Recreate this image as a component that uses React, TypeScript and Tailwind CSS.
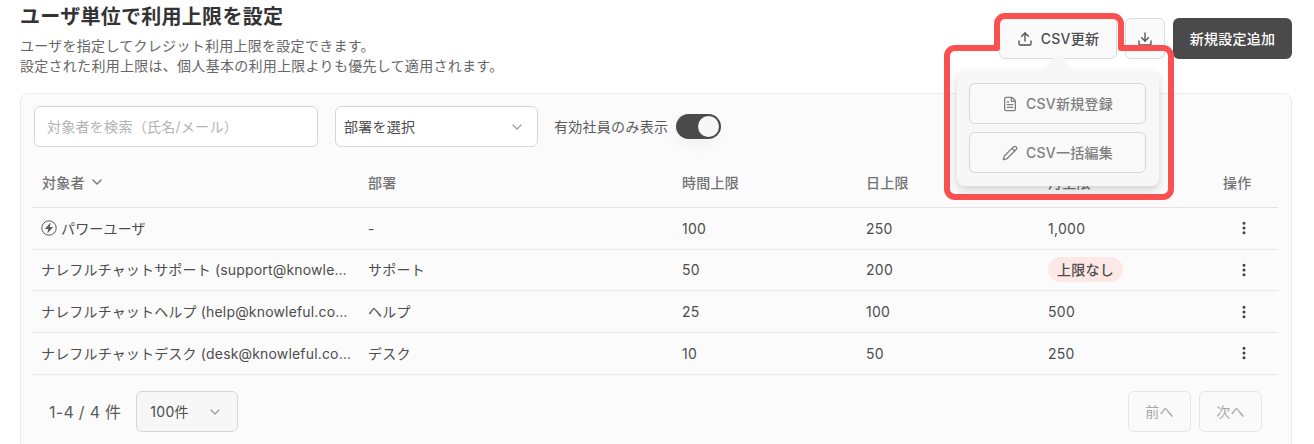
import { ChevronDown, Download, EllipsisVertical, FileText, Pencil, Upload } from 'lucide-react';

const rows = [
  { name: 'パワーユーザ', power: true, dept: '-', hour: '100', day: '250', month: '1,000' },
  { name: 'ナレフルチャットサポート (support@knowleful.co.jp)', dept: 'サポート', hour: '50', day: '200', month: null },
  { name: 'ナレフルチャットヘルプ (help@knowleful.co.jp)', dept: 'ヘルプ', hour: '25', day: '100', month: '500' },
  { name: 'ナレフルチャットデスク (desk@knowleful.co.jp)', dept: 'デスク', hour: '10', day: '50', month: '250' },
];

function PowerIcon() {
  return (
    <svg viewBox="0 0 16 16" className="w-4 h-4 shrink-0 text-[#5c5c5c]" fill="none">
      <circle cx="8" cy="8" r="7.2" stroke="currentColor" strokeWidth="1" />
      <path d="M9.6 2.4 3.8 9h3.3l-.8 4.6L12.2 7H8.8z" fill="currentColor" />
    </svg>
  );
}

export default function App() {
  return (
    <div className="relative h-[444px] w-[1314px] overflow-hidden bg-white font-['Inter','Noto_Sans_CJK_JP',sans-serif] text-[14px] tracking-[0.02em] text-[#4d4d4d]">
      <div className="flex items-start justify-between pl-5 pr-[22px]">
        <div className="pt-[3px]">
          <h1 className="text-[20px] leading-[28px] font-semibold text-[#333333]">ユーザ単位で利用上限を設定</h1>
          <p className="mt-[5px] text-[14px] leading-[20px] text-[#666666]">
            ユーザを指定してクレジット利用上限を設定できます。
            <br />
            設定された利用上限は、個人基本の利用上限よりも優先して適用されます。
          </p>
        </div>
        <div className="flex items-center gap-2 pt-[18px]">
          <button className="flex h-[41px] w-[118px] items-center justify-center gap-2 rounded-md border border-[#dcdcdc] bg-[#fafafa] font-medium text-[#4d4d4d]">
            <Upload className="h-4 w-4" />
            CSV更新
          </button>
          <button className="flex h-[41px] w-10 items-center justify-center rounded-md border border-[#dcdcdc] bg-[#fafafa] text-[#4d4d4d]">
            <Download className="h-4 w-4" />
          </button>
          <button className="h-[41px] w-[119px] rounded-md bg-[#4a4a4a] font-medium text-white">新規設定追加</button>
        </div>
      </div>

      <div className="mx-5 mt-[17px] h-[400px] w-[1272px] rounded-lg border border-[#ebebeb] bg-[#fbfbfb] pt-3 pr-3 pl-[13px]">
        <div className="flex items-center">
          <div className="flex h-[41px] w-[284px] items-center rounded-md border border-[#d6d6d6] bg-white px-3 text-[#b3b3b3]">
            対象者を検索（氏名/メール）
          </div>
          <div className="ml-[17px] flex h-[41px] w-[203px] items-center justify-between rounded-md border border-[#d6d6d6] bg-white pr-3 pl-2 text-[#4d4d4d]">
            部署を選択
            <ChevronDown className="h-4 w-4 text-[#a0a0a0]" />
          </div>
          <span className="ml-4 text-[#5c5c5c]">有効社員のみ表示</span>
          <div className="ml-[8px] flex h-[25px] w-[45px] items-center justify-end rounded-full bg-[#4a4a4a] pr-[2px] shadow-[0_6px_14px_rgba(0,0,0,0.04)]">
            <div className="h-[21px] w-[21px] rounded-full bg-[#f7f7f7]" />
          </div>
        </div>

        <table className="mt-[10px] -ml-px w-[1245px] table-fixed border-collapse">
          <colgroup>
            <col className="w-[326px]" />
            <col className="w-[314px]" />
            <col className="w-[184px]" />
            <col className="w-[182px]" />
            <col className="w-[175px]" />
            <col className="w-[64px]" />
          </colgroup>
          <thead>
            <tr className="h-[50.5px] border-b border-[#e3e3e3] text-left text-[#737373]">
              <th className="pl-[9px] font-medium">
                <span className="flex items-center gap-1">
                  対象者
                  <ChevronDown className="h-4 w-4" />
                </span>
              </th>
              <th className="pl-[9px] font-medium">部署</th>
              <th className="pl-[9px] font-medium">時間上限</th>
              <th className="pl-[9px] font-medium">日上限</th>
              <th className="pl-[9px] font-medium">月上限</th>
              <th className="pl-[9px] font-medium">操作</th>
            </tr>
          </thead>
          <tbody>
            {rows.map((row) => (
              <tr key={row.name} className="h-[41.67px] border-b border-[#e8e8e8]">
                <td className="pr-2 pl-[8px] tracking-[0.012em]">
                  {row.power ? (
                    <span className="flex items-center gap-[4px]">
                      <PowerIcon />
                      {row.name}
                    </span>
                  ) : (
                    <div className="truncate">{row.name}</div>
                  )}
                </td>
                <td className="pl-[9px]">{row.dept}</td>
                <td className="pl-[9px]">{row.hour}</td>
                <td className="pl-[9px]">{row.day}</td>
                <td className="pl-[9px]">
                  {row.month ?? (
                    <span className="inline-block rounded-full bg-[#fde8e6] px-[9px] py-[2px] leading-[21px] font-medium text-[#4d4d4d]">
                      上限なし
                    </span>
                  )}
                </td>
                <td>
                  <div className="flex justify-center pr-[4px]">
                    <EllipsisVertical className="h-4 w-4 text-[#404040]" strokeWidth={2.5} />
                  </div>
                </td>
              </tr>
            ))}
          </tbody>
        </table>

        <div className="mt-[16.5px] flex items-center justify-between pr-[17px] pl-[15px]">
          <div className="flex items-center gap-[15px]">
            <span className="text-[16px] text-[#5c5c5c]">1-4 / 4 件</span>
            <div className="flex h-[41px] w-[102px] items-center justify-between rounded-md border border-[#d6d6d6] bg-[#f7f7f7] pr-[14px] pl-[13px]">
              100件
              <ChevronDown className="h-4 w-4 text-[#a0a0a0]" />
            </div>
          </div>
          <div className="flex gap-2">
            <button className="h-[41px] w-[63px] rounded-md border border-[#e6e6e6] bg-[#fafafa] text-[#a6a6a6]">前へ</button>
            <button className="h-[41px] w-[63px] rounded-md border border-[#e6e6e6] bg-[#fafafa] text-[#a6a6a6]">次へ</button>
          </div>
        </div>
      </div>

      {/* popover */}
      <div className="absolute top-[70px] left-[957px] flex w-[202px] flex-col gap-2 rounded-lg bg-[#f7f7f7] pt-[13px] pr-[13px] pb-[13px] pl-3 shadow-[0_4px_10px_rgba(0,0,0,0.16)]">
        <div className="absolute -top-[17px] left-[86px] h-0 w-0 border-x-[15px] border-b-[17px] border-x-transparent border-b-[#f7f7f7]" />
        <button className="flex h-[41px] items-center justify-center gap-2 rounded-md border border-[#d6d6d6] bg-[#f9f9f9] font-medium text-[#808080]">
          <FileText className="h-4 w-4" />
          CSV新規登録
        </button>
        <button className="flex h-[41px] items-center justify-center gap-2 rounded-md border border-[#d6d6d6] bg-[#f9f9f9] font-medium text-[#808080]">
          <Pencil className="h-4 w-4" />
          CSV一括編集
        </button>
      </div>

      {/* red callout drawn on top of the screenshot */}
      <svg className="pointer-events-none absolute top-0 left-0 h-[444px] w-[1314px]" viewBox="0 0 1314 444" fill="none">
        <path
          d="M997 48V24a8 8 0 0 1 8-8h108a8 8 0 0 1 8 8v24h42a8 8 0 0 1 8 8v133a8 8 0 0 1-8 8H955a8 8 0 0 1-8-8V56a8 8 0 0 1 8-8z"
          stroke="#fb5050"
          strokeWidth="6"
          strokeLinejoin="round"
        />
      </svg>
    </div>
  );
}
